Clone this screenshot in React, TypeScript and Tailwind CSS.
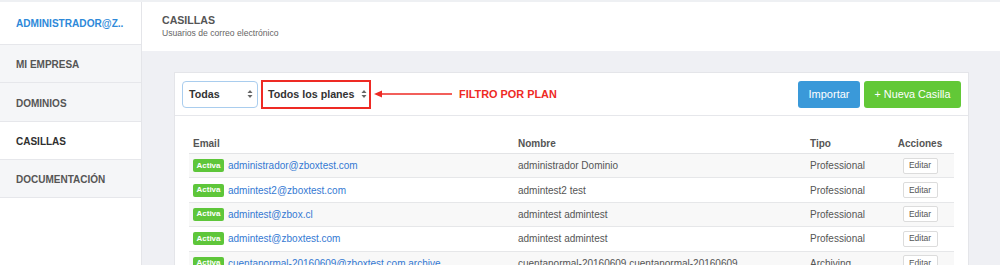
import React from "react";

const rows = [
  { email: "administrador@zboxtest.com", name: "administrador Dominio", tipo: "Professional" },
  { email: "admintest2@zboxtest.com", name: "admintest2 test", tipo: "Professional" },
  { email: "admintest@zbox.cl", name: "admintest admintest", tipo: "Professional" },
  { email: "admintest@zboxtest.com", name: "admintest admintest", tipo: "Professional" },
  { email: "cuentanormal-20160609@zboxtest.com.archive", name: "cuentanormal-20160609 cuentanormal-20160609", tipo: "Archiving" },
];

function Arrows() {
  return (
    <svg width="6" height="10" viewBox="0 0 6 10" className="shrink-0">
      <path d="M3 1 L5.5 4 L0.5 4 Z" fill="#666" />
      <path d="M3 9 L5.5 6 L0.5 6 Z" fill="#666" />
    </svg>
  );
}

export default function App() {
  return (
    <div className="h-[265px] w-[1000px] overflow-hidden bg-white flex flex-col font-['Liberation_Sans',Arial,sans-serif]">
      <div className="h-[2px] bg-[#eef0f3] shrink-0" />
      <div className="flex flex-1 min-h-0">
        <aside className="w-[142px] shrink-0 border-r border-[#e4e5e9] flex flex-col bg-white">
          <div className="h-[43px] border-b border-[#e6e7eb] flex items-center pl-[16px] pt-[1px] text-[10.1px] font-bold text-[#2d89d9]">
            ADMINISTRADOR@Z..
          </div>
          <div className="h-[38px] border-b border-[#e6e7eb] bg-[#f5f6f8] flex items-center pl-[16px] pt-[2px] text-[10px] font-bold text-[#555]">
            MI EMPRESA
          </div>
          <div className="h-[39px] border-b border-[#e6e7eb] bg-[#f5f6f8] flex items-center pl-[16px] pt-[2px] text-[10px] font-bold text-[#555]">
            DOMINIOS
          </div>
          <div className="h-[38px] border-b border-[#e6e7eb] bg-white flex items-center pl-[16px] pt-[2px] text-[10px] font-bold text-[#2f2f2f]">
            CASILLAS
          </div>
          <div className="h-[38px] border-b border-[#e6e7eb] bg-[#f5f6f8] flex items-center pl-[16px] pt-[2px] text-[10px] font-bold text-[#555]">
            DOCUMENTACIÓN
          </div>
        </aside>
        <main className="flex-1 bg-[#eff0f4] flex flex-col min-w-0">
          <header className="h-[49px] shrink-0 bg-white pl-[20px] pt-[12px] flex flex-col">
            <div className="text-[10.6px] font-bold text-[#555] leading-[12px]">CASILLAS</div>
            <div className="text-[8.6px] text-[#666] leading-[10px] mt-[2px]">Usuarios de correo electrónico</div>
          </header>
          <div className="pl-[32px] pr-[31px] pt-[21px]">
            <div className="bg-white border border-[#e4e5e9]">
              <div className="h-[43px] border-b border-[#e6e7eb] flex items-center pl-[7px] pr-[7px]">
                <div className="w-[76px] h-[27px] border border-[#a9cdee] rounded-[4px] bg-white flex items-center justify-between pl-[6px] pr-[4px]">
                  <span className="text-[10.7px] font-bold text-[#333]">Todas</span>
                  <Arrows />
                </div>
                <div className="ml-[3px] w-[110px] h-[29px] border-2 border-[#ee2a24] flex items-center justify-between pl-[5px] pr-[2px]">
                  <span className="text-[10.7px] font-bold text-[#333]">Todos los planes</span>
                  <Arrows />
                </div>
                <svg width="80" height="10" viewBox="0 0 80 10" className="ml-[2px] shrink-0">
                  <path d="M1 5 L9 1.5 L9 8.5 Z" fill="#ee2a24" />
                  <line x1="8" y1="5" x2="79" y2="5" stroke="#ee2a24" strokeWidth="1.6" />
                </svg>
                <span className="ml-[6px] text-[10.9px] font-bold text-[#ee2a24]">FILTRO POR PLAN</span>
                <div className="ml-auto flex gap-[4px]">
                  <button className="w-[62px] h-[27px] rounded-[3px] bg-[#3a99d9] text-white text-[11px]">Importar</button>
                  <button className="w-[97px] h-[27px] rounded-[3px] bg-[#62c837] text-white text-[10.8px]">+ Nueva Casilla</button>
                </div>
              </div>
              <div className="px-[14px] pt-[14px]">
                <div className="grid grid-cols-[325px_292px_80px_1fr] h-[24px] pt-[3px] border-b border-[#e3e4e6] items-center text-[10px] font-bold text-[#555]">
                  <div className="pl-[4px]">Email</div>
                  <div className="pl-[4px]">Nombre</div>
                  <div className="pl-[4px]">Tipo</div>
                  <div className="text-center">Acciones</div>
                </div>
                {rows.map((r, i) => (
                  <div
                    key={i}
                    className={`grid grid-cols-[325px_292px_80px_1fr] h-[24.4px] border-b border-[#e6e7e9] items-center text-[10px] text-[#555] ${i % 2 === 0 ? "bg-[#f8f8f8]" : "bg-white"}`}
                  >
                    <div className="pl-[4px] flex items-center gap-[4px] whitespace-nowrap">
                      <span className="h-[13px] w-[31px] rounded-[2px] bg-[#5ec63a] text-white text-[8px] font-bold flex items-center justify-center">Activa</span>
                      <span className="text-[#3479d3]">{r.email}</span>
                    </div>
                    <div className="pl-[4px] whitespace-nowrap">{r.name}</div>
                    <div className="pl-[4px] whitespace-nowrap">{r.tipo}</div>
                    <div className="flex justify-center">
                      <span className="h-[16px] w-[35px] border border-[#dcdcdc] rounded-[2px] bg-white text-[8.5px] text-[#555] flex items-center justify-center">Editar</span>
                    </div>
                  </div>
                ))}
              </div>
            </div>
          </div>
        </main>
      </div>
    </div>
  );
}
